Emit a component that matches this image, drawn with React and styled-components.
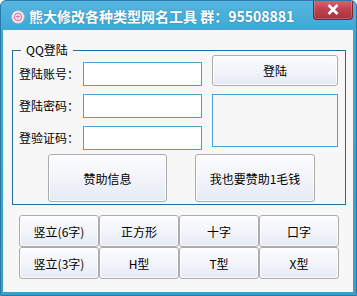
import React from 'react';
import styled, { createGlobalStyle } from 'styled-components';

const GlobalStyle = createGlobalStyle`
  html, body {
    margin: 0;
    padding: 0;
    background: #ffffff;
  }
  body {
    font-family: "Noto Sans CJK SC", "Noto Sans", sans-serif;
  }
`;

const StyledWindow = styled.div`
  width: 357px;
  height: 296px;
  box-sizing: border-box;
  display: flex;
  flex-direction: column;
  background: linear-gradient(#56b6df, #3ea7d6 30px, #3b9fcd);
  border: 1px solid #2b7aa6;
  border-radius: 6px 6px 0 0;
  overflow: hidden;
`;

const StyledTitleBar = styled.div`
  height: 29px;
  flex: none;
  display: flex;
  align-items: flex-start;
  padding-left: 10px;
`;

const StyledIcon = styled.svg`
  width: 14px;
  height: 14px;
  margin-top: 9px;
  flex: none;
`;

const StyledTitle = styled.span`
  margin-left: 4px;
  margin-top: 6px;
  color: #ffffff;
  font-size: 14px;
  font-weight: 700;
  line-height: 18px;
  white-space: nowrap;
  letter-spacing: 0;
  text-shadow: 0 0 2px rgba(0, 60, 100, 0.35);
`;

const StyledClose = styled.button`
  margin-left: auto;
  margin-right: 3px;
  margin-top: -1px;
  width: 40px;
  height: 20px;
  flex: none;
  padding: 0;
  display: flex;
  align-items: center;
  justify-content: center;
  background: linear-gradient(#d36b73, #c0444f 45%, #a9323d);
  border: 1px solid #7e222b;
  border-top: none;
  border-radius: 0 0 4px 4px;
  box-shadow: inset 0 0 0 1px rgba(255, 255, 255, 0.2);
`;

const StyledBody = styled.div`
  flex: 1;
  margin: 0 3px 3px 2px;
  background: #f7f7f7;
  display: flex;
  flex-direction: column;
`;

const StyledGroup = styled.section`
  position: relative;
  margin: 20px 7px 0 9px;
  height: 155px;
  box-sizing: border-box;
  border: 1px solid #1f6e9b;
  display: flex;
  flex-direction: column;
`;

const StyledLegend = styled.span`
  position: absolute;
  top: -8px;
  left: 8px;
  padding: 0 5px;
  background: #f7f7f7;
  font-size: 12px;
  line-height: 14px;
  color: #000;
`;

const StyledTop = styled.div`
  display: flex;
`;

const StyledFields = styled.div`
  display: flex;
  flex-direction: column;
  gap: 8px;
  margin-top: 11px;
  padding-left: 6px;
`;

const StyledRow = styled.div`
  display: flex;
  align-items: center;
`;

const StyledLabel = styled.label`
  width: 64px;
  font-size: 12px;
  line-height: 24px;
  color: #000;
  white-space: nowrap;
`;

const StyledInput = styled.input`
  width: 119px;
  height: 24px;
  box-sizing: border-box;
  border: 1px solid #4b9fd3;
  background: #ffffff;
  margin: 0;
  padding: 0 3px;
  outline: none;
`;

const StyledSide = styled.div`
  display: flex;
  flex-direction: column;
  gap: 8px;
  margin-top: 4px;
  margin-left: 10px;
  width: 126px;
`;

const StyledButton = styled.button`
  width: ${({ $w }) => $w}px;
  height: ${({ $h }) => $h}px;
  box-sizing: border-box;
  margin: 0;
  padding: 0;
  border: 1px solid #acacac;
  border-radius: 3px;
  background: linear-gradient(#fbfcfe, #f3f5fa 45%, #e6eaf4);
  box-shadow: inset 0 0 0 1px rgba(255, 255, 255, 0.8);
  font-family: "Noto Sans CJK SC", "Noto Sans", sans-serif;
  font-size: 12px;
  color: #000;
  white-space: nowrap;
`;

const StyledInfoBox = styled.div`
  height: 53px;
  box-sizing: border-box;
  border: 1px solid #4b9fd3;
  background: #f7f7f7;
`;

const StyledDonate = styled.div`
  display: flex;
  gap: 28px;
  padding-left: 35px;
  margin-top: 4px;
`;

const StyledGrid = styled.div`
  display: grid;
  grid-template-columns: repeat(4, 80px);
  grid-auto-rows: 32px;
  margin: 10px 0 0 16px;
`;

const shapes = ['竖立(6字)', '正方形', '十字', '口字', '竖立(3字)', 'H型', 'T型', 'X型'];

const App = () => (
  <>
    <GlobalStyle />
    <StyledWindow>
      <StyledTitleBar>
        <StyledIcon viewBox="0 0 14 14">
          <circle cx="7" cy="7" r="6.3" fill="#f6eef2" stroke="#c9b7c2" strokeWidth="0.8" />
          <circle cx="7" cy="7" r="3.6" fill="none" stroke="#d77aa6" strokeWidth="1.3" />
          <path d="M5 6.5 L9 6.5 M7 4.8 L7 9.2" stroke="#d77aa6" strokeWidth="1" />
        </StyledIcon>
        <StyledTitle>熊大修改各种类型网名工具 群：95508881</StyledTitle>
        <StyledClose aria-label="关闭">
          <svg width="12" height="11" viewBox="0 0 12 11">
            <path d="M1.5 1 L10.5 10 M10.5 1 L1.5 10" stroke="#ffffff" strokeWidth="2.6" />
          </svg>
        </StyledClose>
      </StyledTitleBar>
      <StyledBody>
        <StyledGroup>
          <StyledLegend>QQ登陆</StyledLegend>
          <StyledTop>
            <StyledFields>
              <StyledRow>
                <StyledLabel>登陆账号：</StyledLabel>
                <StyledInput />
              </StyledRow>
              <StyledRow>
                <StyledLabel>登陆密码：</StyledLabel>
                <StyledInput type="password" />
              </StyledRow>
              <StyledRow>
                <StyledLabel>登验证码：</StyledLabel>
                <StyledInput />
              </StyledRow>
            </StyledFields>
            <StyledSide>
              <StyledButton $w={126} $h={31}>登陆</StyledButton>
              <StyledInfoBox />
            </StyledSide>
          </StyledTop>
          <StyledDonate>
            <StyledButton $w={119} $h={48}>赞助信息</StyledButton>
            <StyledButton $w={120} $h={48}>我也要赞助1毛钱</StyledButton>
          </StyledDonate>
        </StyledGroup>
        <StyledGrid>
          {shapes.map((s) => (
            <StyledButton key={s} $w={80} $h={32}>{s}</StyledButton>
          ))}
        </StyledGrid>
      </StyledBody>
    </StyledWindow>
  </>
);

export default App;
